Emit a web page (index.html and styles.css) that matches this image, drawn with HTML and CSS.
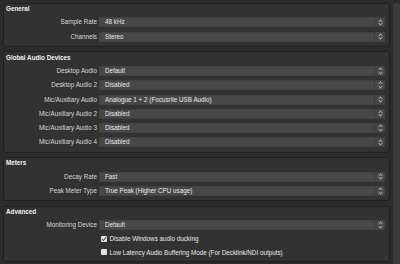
FILE: index.html
```html
<!DOCTYPE html>
<html lang="en">
<head>
    <meta charset="UTF-8">
    <meta name="viewport" content="width=device-width, initial-scale=1.0">
    <title>Audio Settings</title>
    <link rel="stylesheet" href="styles.css">
</head>
<body>
    <div class="page">
        <div class="panel">
            <section class="group">
                <div class="group-title">General</div>
                <label class="field-label">Sample Rate</label>
                <div class="combo"><span>48 kHz</span><i class="spin"></i></div>
                <label class="field-label">Channels</label>
                <div class="combo"><span>Stereo</span><i class="spin"></i></div>
            </section>

            <section class="group">
                <div class="group-title">Global Audio Devices</div>
                <label class="field-label">Desktop Audio</label>
                <div class="combo"><span>Default</span><i class="spin"></i></div>
                <label class="field-label">Desktop Audio 2</label>
                <div class="combo"><span>Disabled</span><i class="spin"></i></div>
                <label class="field-label">Mic/Auxiliary Audio</label>
                <div class="combo"><span>Analogue 1 + 2 (Focusrite USB Audio)</span><i class="spin"></i></div>
                <label class="field-label">Mic/Auxiliary Audio 2</label>
                <div class="combo"><span>Disabled</span><i class="spin"></i></div>
                <label class="field-label">Mic/Auxiliary Audio 3</label>
                <div class="combo"><span>Disabled</span><i class="spin"></i></div>
                <label class="field-label">Mic/Auxiliary Audio 4</label>
                <div class="combo"><span>Disabled</span><i class="spin"></i></div>
            </section>

            <section class="group">
                <div class="group-title">Meters</div>
                <label class="field-label">Decay Rate</label>
                <div class="combo"><span>Fast</span><i class="spin"></i></div>
                <label class="field-label">Peak Meter Type</label>
                <div class="combo"><span>True Peak (Higher CPU usage)</span><i class="spin"></i></div>
            </section>

            <section class="group">
                <div class="group-title">Advanced</div>
                <label class="field-label">Monitoring Device</label>
                <div class="combo"><span>Default</span><i class="spin"></i></div>
                <div class="check-row">
                    <span class="checkbox checked">
                        <svg viewBox="0 0 8 8" width="6" height="6"><path d="M1.2 4.2 L3.2 6.1 L6.9 1.6" fill="none" stroke="#1e1e1e" stroke-width="1.3"/></svg>
                    </span>
                    <span>Disable Windows audio ducking</span>
                </div>
                <div class="check-row">
                    <span class="checkbox"></span>
                    <span>Low Latency Audio Buffering Mode (For Decklink/NDI outputs)</span>
                </div>
            </section>
        </div>
        <div class="scrollbar"><div class="scroll-handle"></div></div>
    </div>
</body>
</html>
```

FILE: styles.css
```css
html, body {
    margin: 0;
    padding: 0;
    height: 100%;
    background-color: #2b2b2b;
    overflow: hidden;
}
body {
    font-family: "Liberation Sans", Arial, sans-serif;
    font-size: 6.3px;
    color: #dddddd;
}
.page {
    display: flex;
    padding: 3px 0 0 3px;
    height: 100%;
    box-sizing: border-box;
}
.panel {
    width: 387px;
    display: flex;
    flex-direction: column;
    gap: 4.5px;
}
.group {
    display: grid;
    grid-template-columns: 93px 1fr;
    column-gap: 2px;
    row-gap: 4.3px;
    padding: 1.2px 4px 4.2px 0;
    background-color: #323232;
    border: 1px solid #202020;
    border-radius: 3px;
}
.group-title {
    grid-column: 1 / -1;
    padding-left: 2px;
    height: 8px;
    line-height: 8px;
    font-weight: bold;
    color: #f0f0f0;
}
.field-label {
    text-align: right;
    line-height: 10px;
    white-space: nowrap;
    color: #d8d8d8;
}
.combo {
    height: 10px;
    display: flex;
    align-items: center;
    background-color: #484848;
    border-radius: 1.5px;
    box-shadow: inset 0 0 0 1px #424242;
    color: #e8e8e8;
}
.combo span {
    flex: 1;
    padding-left: 6px;
    line-height: 10px;
    white-space: nowrap;
    overflow: hidden;
}
.spin {
    width: 11px;
    height: 10px;
    border-left: 1px solid #3c3c3c;
    box-sizing: border-box;
    position: relative;
}
.spin::before,
.spin::after {
    content: "";
    position: absolute;
    left: 3.5px;
    width: 2px;
    height: 2px;
    border: solid #a8a8a8;
    border-width: 1px 0 0 1px;
}
.spin::before {
    top: 2.2px;
    transform: rotate(45deg);
}
.spin::after {
    top: 4.6px;
    transform: rotate(225deg);
}
.check-row {
    grid-column: 2;
    height: 9px;
    display: flex;
    align-items: center;
    gap: 2.5px;
    padding-left: 1.5px;
    white-space: nowrap;
    color: #e8e8e8;
}
.checkbox {
    width: 6.5px;
    height: 6.5px;
    background-color: #e4e4e4;
    border-radius: 1px;
    display: flex;
    align-items: center;
    justify-content: center;
}
.scrollbar {
    margin-left: 3px;
    width: 7px;
    flex: none;
}
.scroll-handle {
    height: 100%;
    background-color: #3b3b3b;
    border-radius: 3px 3px 0 0;
}
```
